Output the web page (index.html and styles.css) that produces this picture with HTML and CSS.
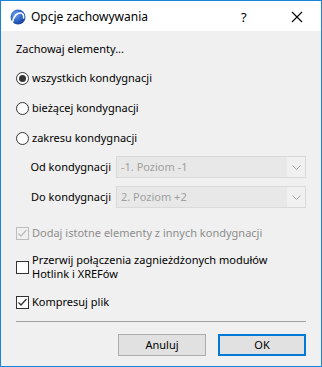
FILE: index.html
```html
<!DOCTYPE html>
<html lang="pl">
<head>
<meta charset="utf-8">
<title>Opcje zachowywania</title>
<link rel="stylesheet" href="styles.css">
</head>
<body>
<div class="window">
  <div class="titlebar">
    <svg class="app-icon" width="16" height="16" viewBox="0 0 16 16">
      <defs>
        <radialGradient id="g" cx="0.35" cy="0.35" r="0.75">
          <stop offset="0" stop-color="#6fa3e8"/>
          <stop offset="0.6" stop-color="#2a5fc4"/>
          <stop offset="1" stop-color="#16398a"/>
        </radialGradient>
      </defs>
      <circle cx="8" cy="8" r="7.5" fill="url(#g)"/>
      <path d="M2.5 13.5 C3.5 7 7 3.5 11 4 C13 4.4 13.8 6.5 13.6 9" fill="none" stroke="#fff" stroke-width="1.6" stroke-linecap="round"/>
    </svg>
    <span class="title">Opcje zachowywania</span>
    <span class="tb-help">?</span>
    <svg class="tb-close" width="12" height="12" viewBox="0 0 12 12">
      <path d="M1 1 L11 11 M11 1 L1 11" stroke="#000" stroke-width="1.1"/>
    </svg>
  </div>
  <div class="content">
    <div class="heading">Zachowaj elementy...</div>
    <div class="radios">
      <label class="row"><span class="radio checked"></span>wszystkich kondygnacji</label>
      <label class="row"><span class="radio"></span>bieżącej kondygnacji</label>
      <label class="row"><span class="radio"></span>zakresu kondygnacji</label>
    </div>
    <div class="range">
      <span class="range-label">Od kondygnacji</span>
      <div class="combo"><span class="combo-text">-1. Poziom -1</span><span class="combo-arrow"><svg width="9" height="5" viewBox="0 0 9 5"><path d="M0.5 0.5 L4.5 4.5 L8.5 0.5" fill="none" stroke="#a6a6a6" stroke-width="1"/></svg></span></div>
      <span class="range-label">Do kondygnacji</span>
      <div class="combo"><span class="combo-text">2. Poziom +2</span><span class="combo-arrow"><svg width="9" height="5" viewBox="0 0 9 5"><path d="M0.5 0.5 L4.5 4.5 L8.5 0.5" fill="none" stroke="#a6a6a6" stroke-width="1"/></svg></span></div>
    </div>
    <label class="row check-row disabled"><span class="checkbox disabled"><svg width="11" height="11" viewBox="0 0 11 11"><path d="M1.5 5.5 L4 8 L9.5 2" fill="none" stroke="#bcbcbc" stroke-width="1.3"/></svg></span>Dodaj istotne elementy z innych kondygnacji</label>
    <label class="row check-row multi"><span class="checkbox"></span><span class="multi-text">Przerwij połączenia zagnieżdżonych modułów<br>Hotlink i XREFów</span></label>
    <label class="row check-row last"><span class="checkbox"><svg width="11" height="11" viewBox="0 0 11 11"><path d="M1.5 5.5 L4 8 L9.5 2" fill="none" stroke="#333" stroke-width="1.3"/></svg></span>Kompresuj plik</label>
    <div class="separator"></div>
    <div class="buttons">
      <button class="btn">Anuluj</button>
      <button class="btn default">OK</button>
    </div>
  </div>
</div>
</body>
</html>
```
FILE: styles.css
```css
* { box-sizing: border-box; }
html, body { margin: 0; padding: 0; background: #f0f0f0; }
body { font-family: "Noto Sans", "Open Sans", sans-serif; font-size: 11px; color: #000; }
.window {
  width: 322px; height: 367px;
  border: 1px solid #1883d7;
  background: #f0f0f0;
  display: flex; flex-direction: column;
}
.titlebar {
  height: 30px; background: #fff;
  display: flex; align-items: center;
  padding-left: 9px;
  flex: none;
}
.app-icon { flex: none; margin-top: 1px; }
.title { margin-left: 5px; font-size: 12px; flex: 1; }
.tb-help { width: 12px; font-size: 13px; margin-right: 38px; margin-top: 1px; }
.tb-close { margin-right: 18px; margin-top: 2px; }
.content {
  flex: 1;
  display: flex; flex-direction: column;
  padding: 10px 15px 0 15px;
}
.heading { height: 16px; line-height: 16px; flex: none; }
.radios { display: flex; flex-direction: column; gap: 14px; margin-top: 13px; flex: none; }
.row { display: flex; align-items: center; height: 16px; line-height: 16px; flex: none; }
.radio {
  width: 13px; height: 13px; border-radius: 50%;
  border: 1px solid #333; background: #fff;
  margin-right: 3px; flex: none;
  display: flex; align-items: center; justify-content: center;
}
.radio.checked::after {
  content: ""; width: 7px; height: 7px; border-radius: 50%; background: #333;
}
.range {
  display: grid; grid-template-columns: 81px 190px;
  grid-auto-rows: 22px;
  column-gap: 5px; row-gap: 8px;
  margin-top: 10px; margin-left: 14px;
  align-items: center;
  flex: none;
}
.range-label { text-align: right; white-space: nowrap; line-height: 16px; }
.combo {
  height: 22px; border: 1px solid #d9d9d9; background: #f0f0f0;
  display: flex;
}
.combo-text {
  flex: 1; background: #e8e8e8; color: #a0a0a0;
  padding-left: 4px; line-height: 20px;
}
.combo-arrow { width: 18px; display: flex; align-items: center; justify-content: center; padding-left: 1px; }
.check-row.disabled { margin-top: 17px; color: #8d8d8d; }
.checkbox {
  width: 13px; height: 13px; border: 1px solid #333; background: #fff;
  margin-right: 3px; flex: none;
  display: flex; align-items: center; justify-content: center;
}
.checkbox.disabled { border-color: #bcbcbc; background: #f0f0f0; }
.check-row.multi { height: 28px; margin-top: 12px; }
.multi-text { line-height: 14px; }
.check-row.last { margin-top: 13px; }
.separator { height: 1px; background: #a0a0a0; margin-top: 11px; flex: none; }
.buttons { display: flex; justify-content: flex-end; gap: 12px; margin-top: 12px; flex: none; }
.btn {
  width: 88px; height: 22px;
  font-family: inherit; font-size: 11px; color: #000;
  background: #e1e1e1; border: 1px solid #adadad;
  padding: 0; line-height: 18px;
}
.btn.default { border: 2px solid #0078d7; }
```
